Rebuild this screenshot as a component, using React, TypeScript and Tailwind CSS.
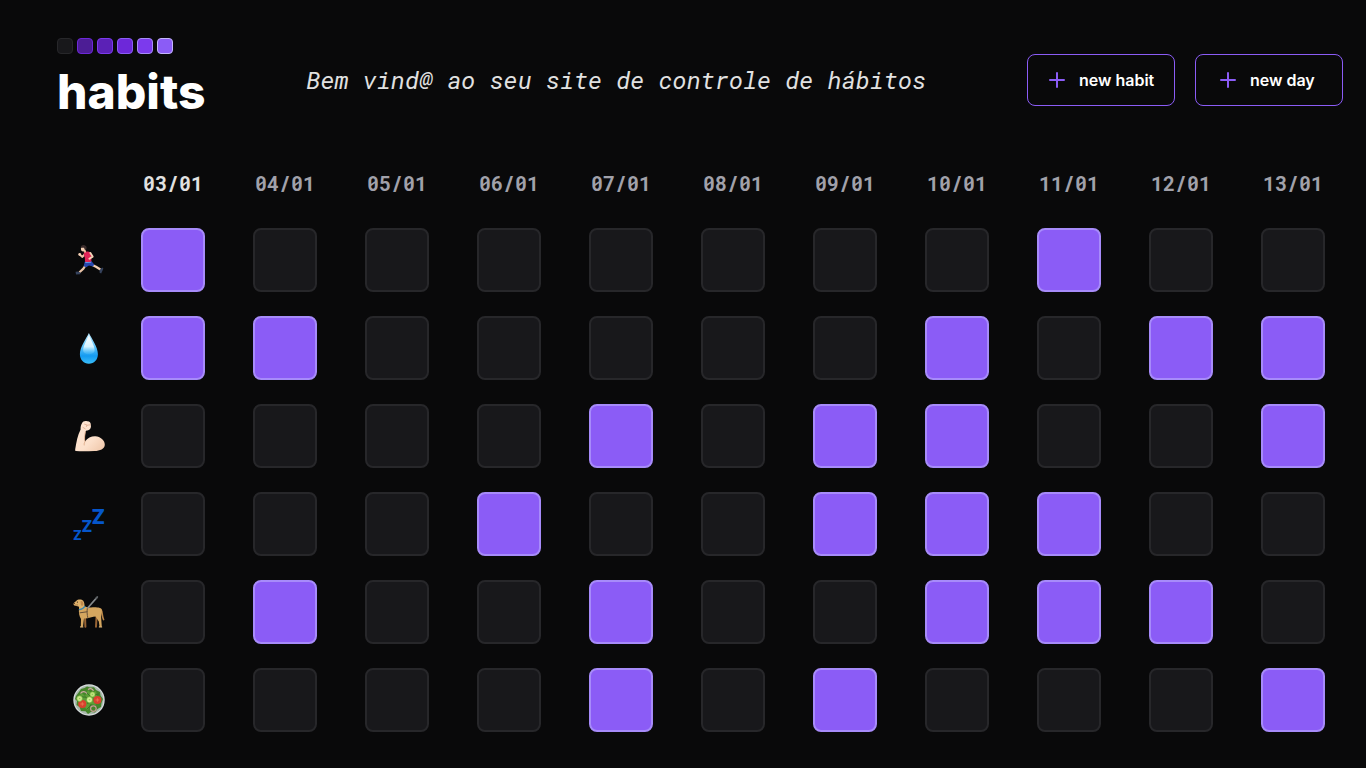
import type { ReactNode } from "react";

function Runner() {
  return (
    <svg viewBox="0 0 32 32" className="size-8" fill="none" strokeLinecap="round" strokeLinejoin="round">
      <path d="M12.4 21.5 L10.4 24.6 L6.8 28" stroke="#eac3a6" strokeWidth="2.2" />
      <path d="M2.6 27.8 L4.6 27.6 L7.6 28.6 L7.2 30.2 L3 30.6 Z" fill="#35425c" />
      <path d="M19.4 21 L23 22.8 L27 25.2" stroke="#f3cfb3" strokeWidth="2.2" />
      <path d="M29.2 23.6 L30.4 24.6 L28.2 29.4 L26.6 28.8 L26.6 26 Z" fill="#35425c" />
      <path d="M11.8 17.6 L18.4 17 L21.2 20.4 L20 22.6 L16 21.6 L13.2 23.2 L10.6 22.2 Z" fill="#2747ad" />
      <path d="M12.8 18.4 L17.6 18.2" stroke="#6a9be8" strokeWidth="1.2" />
      <path d="M12 10 L9.4 12.9 L6.9 10.8" stroke="#efc5a8" strokeWidth="1.9" />
      <circle cx="6.7" cy="10.4" r="1.4" fill="#f5d0b5" />
      <path d="M11 8.2 C12.6 7.4 15.8 7.2 17 8.2 C18.3 10 18.6 14.6 18.3 17.4 C16.4 18.2 13.6 18.2 12 17.8 L11.8 13.4 C10.9 11.8 10.5 10 11 8.2 Z" fill="#e02456" />
      <path d="M17.4 8.9 L19.6 12.6 L16.4 14.8" stroke="#f5d0b5" strokeWidth="1.9" />
      <path d="M11.5 6.2 L12 7.6" stroke="#e9b999" strokeWidth="2.2" />
      <ellipse cx="10.2" cy="4.8" rx="2.3" ry="2.6" fill="#f4cfb3" />
      <path d="M7.8 3.8 C7.6 1.2 10.2 .4 12 1.4 C14 2.1 14 4.6 12.8 6.2 L11.6 5.4 L11 3.8 Z" fill="#392b2b" />
    </svg>
  );
}

function Drop() {
  return (
    <svg viewBox="0 0 32 32" className="size-8">
      <defs>
        <linearGradient id="drop-body" x1="0" y1="0" x2="0" y2="1">
          <stop offset="0" stopColor="#bfeaff" />
          <stop offset=".45" stopColor="#5bc2fa" />
          <stop offset=".75" stopColor="#149bf1" />
          <stop offset="1" stopColor="#39bdf9" />
        </linearGradient>
        <linearGradient id="drop-shine" x1="0" y1="0" x2="0" y2="1">
          <stop offset="0" stopColor="#fff" />
          <stop offset=".6" stopColor="#d5f2ff" />
          <stop offset="1" stopColor="#67cbfc" stopOpacity=".2" />
        </linearGradient>
      </defs>
      <path d="M15.9 1 C18.5 6.5 24.9 14.8 24.9 22.2 C24.9 27.8 21 31.7 15.9 31.7 C10.8 31.7 6.9 27.8 6.9 22.2 C6.9 14.8 13.3 6.5 15.9 1 Z" fill="url(#drop-body)" />
      <path d="M15.9 3.2 C18 8 22 14.5 21.6 18.6 C21.2 23.6 10.6 23.6 10.2 18.6 C9.8 14.5 13.8 8 15.9 3.2 Z" fill="url(#drop-shine)" />
    </svg>
  );
}

function Arm() {
  return (
    <svg viewBox="0 0 32 32" className="size-8">
      <defs>
        <linearGradient id="arm-skin" x1="0" y1="0" x2="1" y2="1">
          <stop offset="0" stopColor="#ffe6d3" />
          <stop offset=".6" stopColor="#fce0cb" />
          <stop offset="1" stopColor="#eec4a6" />
        </linearGradient>
      </defs>
      <path d="M9 3.2 C9.8 1.2 12.2 .4 14.2 1.2 C16.4 1 18 2.8 17.8 4.8 C18.4 7.4 17.4 9.8 15.2 10.2 C14 10.6 13 10.4 12.6 11.4 C12 14.5 11.6 18.5 12 21.4 C14.4 18 18.4 16.2 22.2 16.3 C27.6 16.6 31.8 20.4 31.8 24.7 C31.7 29 27 30.8 21.5 31 C15 31.4 7.8 31.5 3 31.1 C2.2 31 2.1 30.2 2.2 29.2 C3.4 22.5 4.6 15 7.6 9.6 C7.4 7 8 4.8 9 3.2 Z" fill="url(#arm-skin)" />
      <path d="M12.4 11.8 C11.6 15 11.2 19.4 12 21.4 C11.4 22.6 11 23.6 11.2 25" fill="none" stroke="#dba582" strokeWidth=".8" strokeLinecap="round" />
      <path d="M11.6 4.2 L14 5 L13.4 6.6 M14.4 5.2 L17.4 4.8 M10 7.4 L12.2 8.8" fill="none" stroke="#d9a084" strokeWidth=".7" strokeLinecap="round" />
    </svg>
  );
}

function Sleep() {
  return (
    <svg
      viewBox="0 0 32 32"
      className="size-8 overflow-visible font-['Inter',sans-serif] font-extrabold"
      fill="#0556cc"
    >
      <text x="18.6" y="15.8" fontSize="20">Z</text>
      <text x="8.6" y="24.2" fontSize="16">Z</text>
      <text x="0" y="31.8" fontSize="13">Z</text>
    </svg>
  );
}

function GuideDog() {
  return (
    <svg viewBox="0 0 32 32" className="size-8" fill="none" strokeLinecap="round" strokeLinejoin="round">
      <path d="M27.6 13 C29.8 15.4 28.8 20.5 30.6 23.6" stroke="#b98548" strokeWidth="1.6" />
      <path d="M12 20 L12.4 30.8 M23.6 20 L23 30.8" stroke="#986434" strokeWidth="2" />
      <path d="M10 8 C11.4 10.8 13.6 11.6 18 11.4 C23 11 28 11.2 28.8 14 C29.3 17 27.8 19.5 28.2 22.3 L28.8 30.6 L26.6 31 L25.8 25.4 L22.6 20.6 C19.6 20.6 17 21.8 14.6 22.2 L11 22.6 L10 30.6 L7.8 31 L8 23 C6.2 20 5.6 16.4 6 12.4 L7 8 Z" fill="#d5a65f" />
      <path d="M3.2 5 C4.6 3.4 8.4 3 10.2 4.8 C11.6 6.6 11.6 9.4 11.4 11.4 L7 13.6 L5.6 10.4 L2 9.8 C.4 9.4 .1 7.6 1 6.8 Z" fill="#deb16b" />
      <path d="M7.6 5 C9.4 4.6 10.8 6.4 10.4 8.6 C9.8 10.4 8.2 10.2 7.8 8.2 Z" fill="#c08a4c" />
      <path d="M.8 6.9 L2 6.7 L1.8 7.9 L.6 8 Z" fill="#503623" />
      <circle cx="4.4" cy="6.1" r=".6" fill="#352618" />
      <path d="M2 9.2 L4.6 8.9" stroke="#8c5c30" strokeWidth=".6" />
      <path d="M6.3 13.6 C8.2 13.6 10.4 12.4 11.8 10.4" stroke="#3687b1" strokeWidth="1.2" />
      <path d="M14.4 11.8 C13.8 15 14 18.6 14.8 21.6 M7 16.8 L14 15.8" stroke="#675039" strokeWidth="1" />
      <path d="M14.9 11.8 L24 1.4" stroke="#85898b" strokeWidth="1.6" />
      <path d="M23 2.4 L24.4 .9" stroke="#5a5f62" strokeWidth="1.5" />
      <path d="M7.6 30.9 L9.8 30.9 M26.4 30.9 L28.6 30.9" stroke="#e0b778" strokeWidth="1.2" />
    </svg>
  );
}

function Salad() {
  return (
    <svg viewBox="0 0 32 32" className="size-8" fill="none">
      <circle cx="16" cy="16" r="15.7" fill="#d9dfdf" />
      <circle cx="16" cy="16" r="14.5" fill="#aab8ad" />
      <path d="M3 12 L6 8 L8 5 L11.5 4 L14 2.5 L17 3.5 L21 3.2 L23 6 L27 8 L27.5 11.5 L30 15 L28.5 19 L28 23 L24.5 25 L22 28.5 L18 28 L15 30 L12.5 27.2 L8 27 L6.5 23 L3.5 21 L4 17 L2 15 Z" fill="#46852b" />
      <path d="M5 13 L9 9 L12 12 L15 6 L18 9 L23 7 L24 12 L19 15 L23 21 L17 20 L15 26 L11 23 L6 22 Z" fill="#5c9f37" />
      <path d="M8 13 L13 13 L15 20 M12 7 L17 12 L26 10 M14 25 L18 21 L25 24" stroke="#397526" strokeWidth="1" />
      <path d="M7.5 9.5 C9 6.7 13 7.2 13.8 9.6 M15 5.5 C17.5 3.8 20 5 20.4 7" stroke="#cfa6a1" strokeWidth="1.1" />
      <circle cx="20.4" cy="24.6" r="2.8" stroke="#c79c96" strokeWidth="1.2" />
      <circle cx="9.3" cy="20" r="4.1" fill="#d8412e" />
      <path d="M7.4 20 H11.2 M9.3 18.2 V21.8" stroke="#ea7752" strokeWidth=".9" />
      <circle cx="24.4" cy="16" r="4" fill="#dc402f" />
      <path d="M22.6 16 H26.2 M24.4 14.3 V17.7" stroke="#ea7752" strokeWidth=".9" />
      <circle cx="6.6" cy="14.6" r="2.8" fill="#cce98b" stroke="#70ad36" strokeWidth=".6" />
      <circle cx="16.5" cy="15.8" r="3" fill="#d3ee98" stroke="#69a930" strokeWidth=".6" />
      <circle cx="19.5" cy="10.4" r="2.6" fill="#bce07c" stroke="#69a930" strokeWidth=".6" />
      <path d="M6 14.6 H7.3 M15.8 15.8 H17.3 M18.8 10.4 H20" stroke="#92c450" strokeWidth="1" />
    </svg>
  );
}

function PlusIcon() {
  return (
    <svg viewBox="0 0 20 20" className="size-5 shrink-0" stroke="#8b5cf6" strokeWidth="2" strokeLinecap="round" aria-hidden="true">
      <path d="M3 10 H17 M10 3 V17" />
    </svg>
  );
}

const levels = [
  "border-[#27272a] bg-[#18181b]",
  "border-[#6d28d9] bg-[#4c1d95]",
  "border-[#7c3aed] bg-[#5b21b6]",
  "border-[#8b5cf6] bg-[#6d28d9]",
  "border-[#a78bfa] bg-[#7c3aed]",
  "border-[#c4b5fd] bg-[#8b5cf6]",
];

const days = ["03/01", "04/01", "05/01", "06/01", "07/01", "08/01", "09/01", "10/01", "11/01", "12/01", "13/01"];

const habits: { name: string; icon: ReactNode; done: number[] }[] = [
  { name: "running", icon: <Runner />, done: [0, 8] },
  { name: "water", icon: <Drop />, done: [0, 1, 7, 9, 10] },
  { name: "workout", icon: <Arm />, done: [4, 6, 7, 10] },
  { name: "sleep", icon: <Sleep />, done: [3, 6, 7, 8] },
  { name: "dog", icon: <GuideDog />, done: [1, 4, 7, 8, 9] },
  { name: "food", icon: <Salad />, done: [4, 6, 10] },
];

export default function App() {
  return (
    <div className="min-h-screen bg-[#09090a] pb-6 font-['Inter',sans-serif] text-white">
      <header className="flex h-38 items-center justify-between pt-2 pr-[23px] pl-[57px]">
        <div className="flex flex-col gap-2">
          <div className="flex gap-1">
            {levels.map((level) => (
              <span key={level} className={`size-4 rounded-sm border ${level}`} />
            ))}
          </div>
          <span className="text-5xl leading-[60px] font-extrabold">habits</span>
        </div>
        <h1 className="font-['Roboto_Mono','DejaVu_Sans_Mono',monospace] text-2xl text-[#e1e1e1] italic">
          Bem vind@ ao seu site de controle de hábitos
        </h1>
        <div className="flex gap-5">
          <button type="button" className="flex h-13 w-37 items-center gap-3 rounded-lg border border-[#8b5cf6] pl-[19px] font-semibold whitespace-nowrap">
            <PlusIcon />
            new habit
          </button>
          <button type="button" className="flex h-13 w-37 items-center gap-3 rounded-lg border border-[#8b5cf6] pl-[22px] font-semibold whitespace-nowrap">
            <PlusIcon />
            new day
          </button>
        </div>
      </header>

      <main className="pr-[17px] pl-[61px]">
        <table className="w-full table-fixed border-collapse">
          <thead>
            <tr className="h-16 font-['Roboto_Mono','DejaVu_Sans_Mono',monospace] text-xl text-[#a1a1aa]">
              <td className="w-14" />
              {days.map((day) => (
                <th key={day} scope="col" className="p-0 pb-0.5 font-bold first-of-type:text-[#e1e1e1]">
                  {day}
                </th>
              ))}
            </tr>
          </thead>
          <tbody>
            {habits.map((habit) => (
              <tr key={habit.name} className="h-22">
                <th scope="row" aria-label={habit.name} className="p-0">
                  <div className="flex justify-center">{habit.icon}</div>
                </th>
                {days.map((day, index) => (
                  <td key={day} className="p-0">
                    <input
                      type="checkbox"
                      aria-label={`${habit.name} ${day}`}
                      defaultChecked={habit.done.includes(index)}
                      className="mx-auto block size-16 appearance-none rounded-lg border-2 border-[#27272a] bg-[#18181b] checked:border-[#a78bfa] checked:bg-[#8b5cf6]"
                    />
                  </td>
                ))}
              </tr>
            ))}
          </tbody>
        </table>
      </main>
    </div>
  );
}
